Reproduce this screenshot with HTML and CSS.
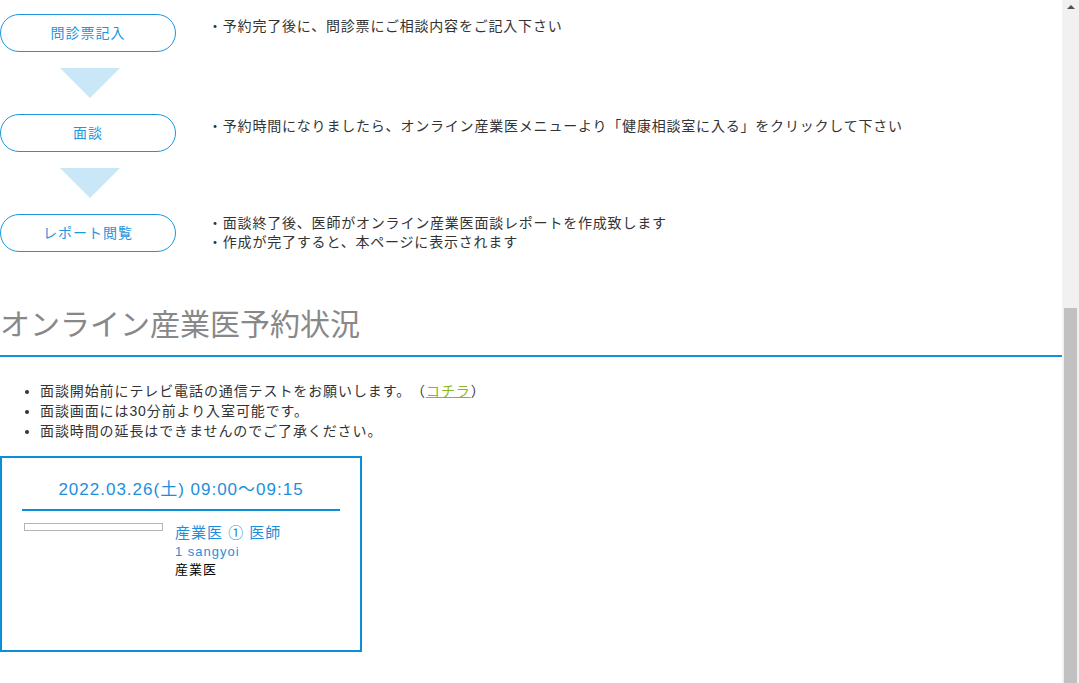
FILE: index.html
```html
<!DOCTYPE html>
<html lang="ja">
<head>
<meta charset="utf-8">
<title>オンライン産業医</title>
<link rel="stylesheet" href="styles.css">
</head>
<body>
<div class="window">
  <main class="page">
    <section class="flow">
      <div class="step">
        <div class="step-btn">問診票記入</div>
        <div class="step-desc">
          <p>・予約完了後に、問診票にご相談内容をご記入下さい</p>
        </div>
      </div>
      <div class="arrow"></div>
      <div class="step">
        <div class="step-btn">面談</div>
        <div class="step-desc">
          <p>・予約時間になりましたら、オンライン産業医メニューより「健康相談室に入る」をクリックして下さい</p>
        </div>
      </div>
      <div class="arrow"></div>
      <div class="step">
        <div class="step-btn">レポート閲覧</div>
        <div class="step-desc step-desc--multi">
          <p>・面談終了後、医師がオンライン産業医面談レポートを作成致します</p>
          <p>・作成が完了すると、本ページに表示されます</p>
        </div>
      </div>
    </section>

    <h2 class="section-title">オンライン産業医予約状況</h2>

    <ul class="notes">
      <li>面談開始前にテレビ電話の通信テストをお願いします。（<a class="link" href="#">コチラ</a>）</li>
      <li>面談画面には30分前より入室可能です。</li>
      <li>面談時間の延長はできませんのでご了承ください。</li>
    </ul>

    <div class="card">
      <div class="card-date">2022.03.26(土) 09:00〜09:15</div>
      <div class="doctor">
        <div class="doctor-photo"></div>
        <div class="doctor-info">
          <div class="doctor-name">産業医 ① 医師</div>
          <div class="doctor-id">1 sangyoi</div>
          <div class="doctor-role">産業医</div>
        </div>
      </div>
    </div>
  </main>

  <div class="scrollbar">
    <div class="scroll-arrow"><span class="scroll-arrow-up"></span></div>
    <div class="scroll-track">
      <div class="scroll-thumb"></div>
    </div>
  </div>
</div>
</body>
</html>
```

FILE: styles.css
```css
html, body {
  margin: 0;
  padding: 0;
  background: #fff;
}

body {
  font-family: "Liberation Sans", "Noto Sans CJK JP", sans-serif;
  color: #333;
  text-spacing-trim: space-all;
}

p {
  margin: 0;
}

.window {
  display: flex;
  height: 683px;
  overflow: hidden;
}

.page {
  flex: 1;
  min-width: 0;
}

/* ---- flow steps ---- */
.flow {
  padding-top: 14px;
}

.step {
  display: flex;
  align-items: flex-start;
}

.step-btn {
  width: 176px;
  height: 38px;
  box-sizing: border-box;
  border: 1px solid #1c97de;
  border-radius: 19px;
  display: flex;
  align-items: center;
  justify-content: center;
  padding-bottom: 3px;
  color: #1c97de;
  font-size: 14px;
  letter-spacing: 1px;
  flex-shrink: 0;
}

.step-desc {
  margin-left: 32px;
  padding-top: 3px;
  font-size: 14px;
  line-height: 19px;
  letter-spacing: 0.8px;
}

.step-desc--multi {
  padding-top: 0;
}

.arrow {
  width: 0;
  height: 0;
  border-left: 30px solid transparent;
  border-right: 30px solid transparent;
  border-top: 30px solid #c9e7f6;
  margin: 16px 0 16px 60px;
}

/* ---- section title ---- */
.section-title {
  margin: 53px 0 0;
  padding: 0 0 10px;
  font-size: 30px;
  line-height: 40px;
  font-weight: normal;
  color: #888;
  letter-spacing: 0;
  border-bottom: 2px solid #0b93db;
}

/* ---- notes ---- */
.notes {
  margin: 24px 0 0;
  padding-left: 40px;
  font-size: 14px;
  line-height: 20px;
  letter-spacing: 0.9px;
  color: #333;
}

.link {
  color: #8cb51e;
  text-decoration: underline;
}

/* ---- reservation card ---- */
.card {
  margin-top: 15px;
  width: 362px;
  height: 196px;
  box-sizing: border-box;
  border: 2px solid #0b8fd8;
  padding: 0 20px;
}

.card-date {
  padding: 20px 0 7px;
  border-bottom: 2px solid #0b8fd8;
  text-align: center;
  font-size: 17px;
  line-height: 24px;
  letter-spacing: 1px;
  color: #1c8fdc;
}

.doctor {
  display: flex;
  align-items: flex-start;
  margin-top: 12px;
  padding-left: 2px;
}

.doctor-photo {
  width: 139px;
  height: 8px;
  box-sizing: border-box;
  border: 1px solid #b4b4b4;
  flex-shrink: 0;
}

.doctor-info {
  margin-left: 12px;
  letter-spacing: 1px;
}

.doctor-name {
  font-size: 15px;
  line-height: 20px;
  color: #1c8fdc;
}

.doctor-id {
  font-size: 13px;
  line-height: 18px;
  color: #1c8fdc;
}

.doctor-role {
  font-size: 13px;
  line-height: 18px;
  color: #000;
}

/* ---- fake scrollbar ---- */
.scrollbar {
  width: 17px;
  flex-shrink: 0;
  background: #f1f1f1;
  display: flex;
  flex-direction: column;
}

.scroll-arrow {
  height: 17px;
  display: flex;
  justify-content: center;
  padding-top: 5px;
  box-sizing: border-box;
}

.scroll-arrow-up {
  width: 0;
  height: 0;
  border-left: 4px solid transparent;
  border-right: 4px solid transparent;
  border-bottom: 4px solid #505050;
}

.scroll-track {
  flex: 1;
  display: flex;
  flex-direction: column;
  padding-top: 291px;
}

.scroll-thumb {
  flex: 1;
  margin: 0 2px;
  background: #c1c1c1;
}
```
